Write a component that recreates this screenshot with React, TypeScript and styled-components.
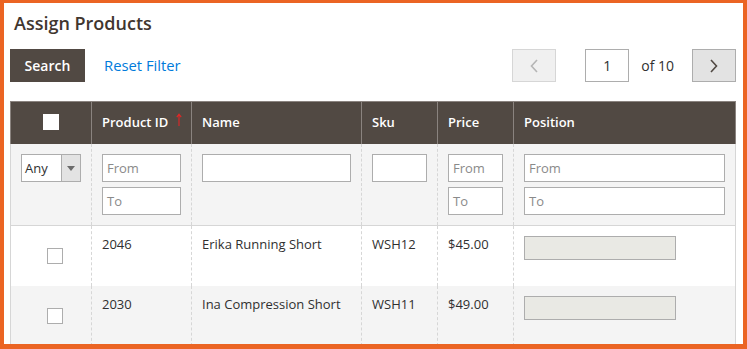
import React from "react";
import styled, { createGlobalStyle } from "styled-components";

const GlobalStyle = createGlobalStyle`
  html, body {
    margin: 0;
    padding: 0;
    background: #fff;
  }
  body {
    font-family: "Open Sans", "Liberation Sans", sans-serif;
    color: #303030;
  }
`;

const COLS = "81px 100px 170px 76px 76px 1fr";

const Frame = styled.div`
  box-sizing: border-box;
  width: 747px;
  height: 349px;
  border-style: solid;
  border-color: #eb6423;
  border-width: 3px 4px 5px 4px;
  padding: 0 7px 0 6px;
  overflow: hidden;
  background: #fff;
`;

const Title = styled.h2`
  margin: 8px 0 0 4px;
  font-size: 18px;
  line-height: 24px;
  font-weight: 600;
  color: #41362f;
`;

const Toolbar = styled.div`
  display: flex;
  align-items: center;
  height: 33px;
  margin-top: 14px;
`;

const SearchButton = styled.button`
  box-sizing: border-box;
  width: 75px;
  height: 33px;
  border: none;
  background: #514943;
  color: #fff;
  font-family: inherit;
  font-size: 14px;
  font-weight: 600;
  padding: 0;
`;

const TextLink = styled.a`
  margin-left: 19px;
  margin-top: -1px;
  color: #007bdb;
  font-size: 14.8px;
  text-decoration: none;
`;

const Pager = styled.div`
  margin-left: auto;
  display: flex;
  align-items: center;
`;

const PageButton = styled.button<{ $disabled?: boolean }>`
  box-sizing: border-box;
  width: 44px;
  height: 33px;
  padding: 0;
  display: flex;
  align-items: center;
  justify-content: center;
  background: ${(p) => (p.$disabled ? "#f0f0f0" : "#e3e3e3")};
  border: 1px solid ${(p) => (p.$disabled ? "#d6d6d6" : "#adadad")};
  color: ${(p) => (p.$disabled ? "#b5b5b5" : "#514943")};
`;

const PageInput = styled.div`
  box-sizing: border-box;
  width: 44px;
  height: 33px;
  margin-left: 29px;
  border: 1px solid #adadad;
  display: flex;
  align-items: center;
  justify-content: center;
  font-size: 14px;
  color: #303030;
`;

const PageTotal = styled.span`
  margin: 0 18px 0 12px;
  font-size: 14px;
  color: #303030;
`;

const Grid = styled.div`
  margin-top: 19px;
`;

const Row = styled.div<{ $bg: string; $line: string }>`
  box-sizing: border-box;
  display: grid;
  grid-template-columns: ${COLS};
  background: ${(p) => p.$bg};
  border-right: 1px solid ${(p) => p.$line};
`;

const HeaderRow = styled(Row)`
  height: 43px;
  border-top: 1px solid #8a837f;
`;

const FilterRow = styled(Row)`
  border-bottom: 1px solid #d6d6d6;
`;

const HeadCell = styled.div<{ $center?: boolean }>`
  display: flex;
  align-items: center;
  justify-content: ${(p) => (p.$center ? "center" : "flex-start")};
  padding: 0 10px 2px;
  border-left: 1px solid #8a837f;
  color: #fff;
  font-size: 13px;
  font-weight: 600;
  white-space: nowrap;
`;

const Cell = styled.div<{ $first?: boolean }>`
  display: flex;
  flex-direction: column;
  gap: 5px;
  padding: 10px;
  border-left: 1px ${(p) => (p.$first ? "solid" : "dashed")} #d6d6d6;
  font-size: 13px;
  line-height: 18px;
  color: #303030;
`;

const TextCell = styled(Cell)`
  padding-top: 9px;
`;

const CheckCell = styled(Cell)`
  justify-content: center;
  padding: 0 0 0 36px;
`;

const DataRow = styled(Row)`
  height: 60px;
`;

const SortArrow = styled.svg`
  flex: none;
  margin-left: 8px;
  margin-top: -5px;
`;

const Box = styled.span<{ $head?: boolean }>`
  box-sizing: border-box;
  display: block;
  width: 16px;
  height: 16px;
  background: #fff;
  border: 1px solid ${(p) => (p.$head ? "#fff" : "#adadad")};
`;

const Field = styled.div`
  box-sizing: border-box;
  width: 100%;
  height: 28px;
  border: 1px solid #adadad;
  background: #fff;
  padding: 0 4px;
  display: flex;
  align-items: center;
  font-size: 13px;
  color: #8a8a8a;
`;

const Select = styled.div`
  box-sizing: border-box;
  width: 60px;
  height: 28px;
  border: 1px solid #adadad;
  background: #fff;
  display: flex;
  align-items: stretch;
  font-size: 13px;
  color: #303030;
`;

const SelectValue = styled.span`
  flex: 1;
  display: flex;
  align-items: center;
  padding-left: 3px;
`;

const SelectToggle = styled.span`
  width: 18px;
  border-left: 1px solid #adadad;
  background: #e3e3e3;
  display: flex;
  align-items: center;
  justify-content: center;
`;

const PositionBox = styled.div`
  box-sizing: border-box;
  width: 152px;
  height: 24px;
  border: 1px solid #adadad;
  background: #e9e9e4;
`;

const Chevron = ({ dir }: { dir: "left" | "right" }) => (
  <svg width="8" height="14" viewBox="0 0 8 14">
    <polyline
      points={dir === "left" ? "7,1 1.5,7 7,13" : "1,1 6.5,7 1,13"}
      fill="none"
      stroke="currentColor"
      strokeWidth="1.6"
    />
  </svg>
);

const products = [
  { id: "2046", name: "Erika Running Short", sku: "WSH12", price: "$45.00", bg: "#fff" },
  { id: "2030", name: "Ina Compression Short", sku: "WSH11", price: "$49.00", bg: "#f4f4f4" },
];

export default function App() {
  return (
    <>
      <GlobalStyle />
      <Frame>
        <Title>Assign Products</Title>
        <Toolbar>
          <SearchButton>Search</SearchButton>
          <TextLink href="#">Reset Filter</TextLink>
          <Pager>
            <PageButton $disabled>
              <Chevron dir="left" />
            </PageButton>
            <PageInput>1</PageInput>
            <PageTotal>of 10</PageTotal>
            <PageButton>
              <Chevron dir="right" />
            </PageButton>
          </Pager>
        </Toolbar>

        <Grid>
          <HeaderRow $bg="#514943" $line="#8a837f">
            <HeadCell $center>
              <Box $head />
            </HeadCell>
            <HeadCell>
              Product ID
              <SortArrow width="6" height="13" viewBox="0 0 6 13">
                <path d="M3 1.5V13M0.8 4.2L3 1.2L5.2 4.2" fill="none" stroke="#e22626" strokeWidth="1.1" />
              </SortArrow>
            </HeadCell>
            <HeadCell>Name</HeadCell>
            <HeadCell>Sku</HeadCell>
            <HeadCell>Price</HeadCell>
            <HeadCell>Position</HeadCell>
          </HeaderRow>

          <FilterRow $bg="#f4f4f4" $line="#d6d6d6">
            <Cell $first>
              <Select>
                <SelectValue>Any</SelectValue>
                <SelectToggle>
                  <svg width="8" height="5" viewBox="0 0 8 5">
                    <path d="M0 0H8L4 5Z" fill="#6b6b6b" />
                  </svg>
                </SelectToggle>
              </Select>
            </Cell>
            <Cell>
              <Field>From</Field>
              <Field>To</Field>
            </Cell>
            <Cell>
              <Field />
            </Cell>
            <Cell>
              <Field />
            </Cell>
            <Cell>
              <Field>From</Field>
              <Field>To</Field>
            </Cell>
            <Cell>
              <Field>From</Field>
              <Field>To</Field>
            </Cell>
          </FilterRow>

          {products.map((p) => (
            <DataRow key={p.id} $bg={p.bg} $line="#d6d6d6">
              <CheckCell $first>
                <Box />
              </CheckCell>
              <TextCell>{p.id}</TextCell>
              <TextCell>{p.name}</TextCell>
              <TextCell>{p.sku}</TextCell>
              <TextCell>{p.price}</TextCell>
              <Cell>
                <PositionBox />
              </Cell>
            </DataRow>
          ))}
        </Grid>
      </Frame>
    </>
  );
}
